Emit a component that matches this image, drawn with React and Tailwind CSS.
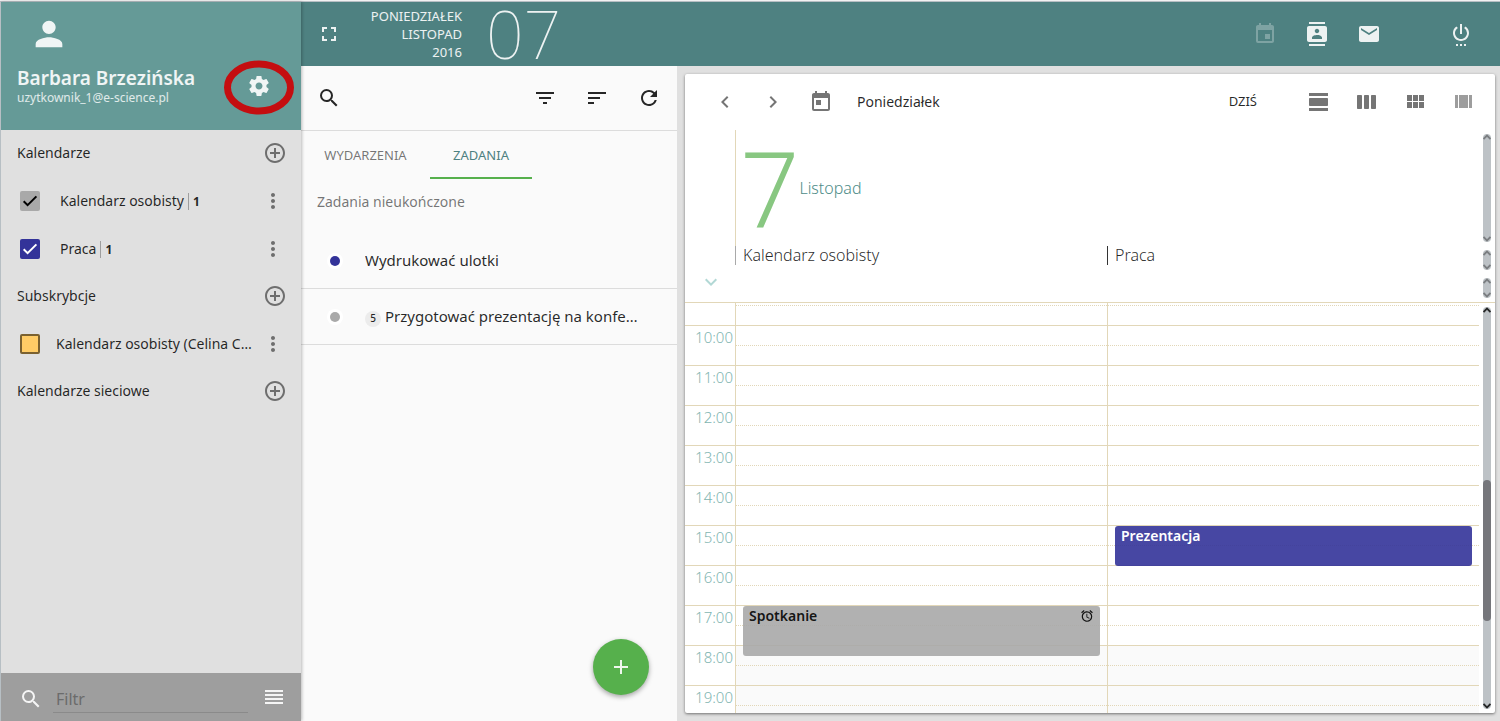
import {
  MdAddCircleOutline,
  MdAlarm,
  MdAdd,
  MdChevronLeft,
  MdChevronRight,
  MdContacts,
  MdEmail,
  MdEvent,
  MdExpandMore,
  MdFilterList,
  MdFullscreen,
  MdMoreVert,
  MdPerson,
  MdRefresh,
  MdSearch,
  MdSettingsPower,
  MdSort,
  MdToday,
} from 'react-icons/md'

const paths = {
  settings:
    'M19.43 12.98c.04-.32.07-.64.07-.98s-.03-.66-.07-.98l2.11-1.65c.19-.15.24-.42.12-.64l-2-3.46c-.12-.22-.39-.3-.61-.22l-2.49 1c-.52-.4-1.08-.73-1.69-.98l-.38-2.65C14.46 2.18 14.25 2 14 2h-4c-.25 0-.46.18-.49.42l-.38 2.65c-.61.25-1.17.59-1.69.98l-2.49-1c-.23-.09-.49 0-.61.22l-2 3.46c-.13.22-.07.49.12.64l2.11 1.65c-.04.32-.07.65-.07.98s.03.66.07.98l-2.11 1.65c-.19.15-.24.42-.12.64l2 3.46c.12.22.39.3.61.22l2.49-1c.52.4 1.08.73 1.69.98l.38 2.65c.03.24.24.42.49.42h4c.25 0 .46-.18.49-.42l.38-2.65c.61-.25 1.17-.59 1.69-.98l2.49 1c.23.09.49 0 .61-.22l2-3.46c.12-.22.07-.49-.12-.64l-2.11-1.65zM12 15.5c-1.93 0-3.5-1.57-3.5-3.5s1.57-3.5 3.5-3.5 3.5 1.57 3.5 3.5-1.57 3.5-3.5 3.5z',
  day: 'M2 21h19v-3H2v3zM20 8H3c-.55 0-1 .45-1 1v6c0 .55.45 1 1 1h17c.55 0 1-.45 1-1V9c0-.55-.45-1-1-1zM2 3v3h19V3H2z',
  week: 'M6 5H3c-.55 0-1 .45-1 1v12c0 .55.45 1 1 1h3c.55 0 1-.45 1-1V6c0-.55-.45-1-1-1zm14 0h-3c-.55 0-1 .45-1 1v12c0 .55.45 1 1 1h3c.55 0 1-.45 1-1V6c0-.55-.45-1-1-1zm-7 0h-3c-.55 0-1 .45-1 1v12c0 .55.45 1 1 1h3c.55 0 1-.45 1-1V6c0-.55-.45-1-1-1z',
  month: 'M4 11h5V5H4v6zm0 7h5v-6H4v6zm6 0h5v-6h-5v6zm6 0h5v-6h-5v6zm-6-7h5V5h-5v6zm6-6v6h5V5h-5z',
  columns: 'M4 18h3V5H4v13zM18 5v13h3V5h-3zM8 18h9V5H8v13z',
  reorder: 'M3 15h18v-2H3v2zm0 4h18v-2H3v2zm0-8h18V9H3v2zm0-6v2h18V5H3z',
}

const Icon = ({ name }) => (
  <svg width="24" height="24" viewBox="0 0 24 24" fill="currentColor">
    <path d={paths[name]} />
  </svg>
)

const IconButton = ({ label, className = '', children }) => (
  <button aria-label={label} className={`flex size-10 shrink-0 items-center justify-center ${className}`}>
    {children}
  </button>
)

const calendars = [
  { id: 'personal', name: 'Kalendarz osobisty', count: 1, checked: true, box: 'bg-[#a9a9a9]', tick: 'text-black' },
  { id: 'work', name: 'Praca', count: 1, checked: true, box: 'bg-[#333399]', tick: 'text-white' },
]

const subscriptions = [
  {
    id: 'celina',
    name: 'Kalendarz osobisty (Celina Czarnecka)',
    checked: false,
    box: 'bg-[#ffcc66] border-2 border-[#7a6130]',
    tick: '',
  },
]

const tasks = [
  { id: 1, title: 'Wydrukować ulotki', dot: 'bg-[#333399]' },
  { id: 2, title: 'Przygotować prezentację na konferencję', priority: 5, dot: 'bg-[#a9a9a9]' },
]

const hours = [10, 11, 12, 13, 14, 15, 16, 17, 18, 19]

const columns = [
  {
    name: 'Kalendarz osobisty',
    border: 'border-[#a9a9a9]',
    events: [{ title: 'Spotkanie', start: 17, length: 1.25, alarm: true, style: 'bg-[#a9a9a9]/90 text-black/90' }],
  },
  {
    name: 'Praca',
    border: 'border-[#333333]',
    events: [{ title: 'Prezentacja', start: 15, length: 1, style: 'bg-[#333399]/90 text-white' }],
  },
]

const views = [
  { name: 'day', label: 'Dzień' },
  { name: 'week', label: 'Tydzień' },
  { name: 'month', label: 'Miesiąc' },
  { name: 'columns', label: 'Wiele kolumn' },
]

const HOUR_HEIGHT = 40
const FIRST_ROW = 22

const SectionTitle = ({ children }) => (
  <div className="flex h-[47px] items-center justify-between pb-px pl-4 pr-[14px]">
    <h2>{children}</h2>
    <button aria-label={`Dodaj: ${children}`} className="text-[#6e6e6e]">
      <MdAddCircleOutline size={24} />
    </button>
  </div>
)

const CalendarItem = ({ item }) => (
  <li className="flex h-12 items-center pb-px pl-[19px] pr-4">
    <span className="relative size-5 shrink-0">
      <input
        id={item.id}
        type="checkbox"
        defaultChecked={item.checked}
        className={`block size-5 appearance-none rounded-xs ${item.box}`}
      />
      {item.checked && (
        <svg
          viewBox="0 0 20 20"
          fill="none"
          stroke="currentColor"
          strokeWidth="2"
          className={`pointer-events-none absolute inset-0 ${item.tick}`}
        >
          <path d="M3.7 10.2 L7.6 14.2 L16.4 5.4" />
        </svg>
      )}
    </span>
    <label htmlFor={item.id} className={`mr-2 min-w-0 flex-1 truncate ${item.count ? 'pl-5' : 'pl-4'}`}>
      {item.name}
      {item.count && <span className="ml-1 border-l border-[#9e9e9e] pl-1 text-xs font-bold">{item.count}</span>}
    </label>
    <button aria-label={`Opcje: ${item.name}`} className="shrink-0 text-[#6e6e6e]">
      <MdMoreVert size={24} />
    </button>
  </li>
)

const Sidebar = () => (
  <aside className="z-10 flex w-[301px] shrink-0 flex-col border-l border-[#b7bfc4] bg-[#e0e0e0] text-sm text-black/85 shadow-[1px_0_3px_rgba(0,0,0,0.25)]">
    <div className="flex h-32 items-end justify-between bg-[#659a97] pl-4 pr-[30px] text-white/90">
      <div className="flex h-full flex-col">
        <MdPerson size={40} className="mt-3 ml-3" />
        <div className="mt-3 text-[19px] leading-6 font-semibold">Barbara Brzezińska</div>
        <div className="text-xs leading-4 text-white/80">uzytkownik_1@e-science.pl</div>
      </div>
      <button aria-label="Ustawienia" className="relative mb-8">
        <Icon name="settings" />
        <svg className="pointer-events-none absolute -top-4 -left-6" width="72" height="58" viewBox="0 0 72 58">
          <ellipse cx="36" cy="29.5" rx="31.5" ry="23.5" fill="none" stroke="#c40e10" strokeWidth="7" />
        </svg>
      </button>
    </div>
    <div className="flex-1">
      <SectionTitle>Kalendarze</SectionTitle>
      <ul>{calendars.map((item) => <CalendarItem key={item.id} item={item} />)}</ul>
      <SectionTitle>Subskrybcje</SectionTitle>
      <ul>{subscriptions.map((item) => <CalendarItem key={item.id} item={item} />)}</ul>
      <SectionTitle>Kalendarze sieciowe</SectionTitle>
    </div>
    <div className="flex h-12 items-center bg-[#9e9e9e] pl-[18px] pr-[15px] text-white/90">
      <MdSearch size={24} className="mt-1 shrink-0" />
      <input
        aria-label="Filtr"
        placeholder="Filtr"
        className="mt-1 mr-[14px] ml-[10px] h-7 min-w-0 flex-1 border-b border-[#8a8a8a] pl-[3px] text-base outline-none placeholder:text-[#6b6b6b]"
      />
      <button aria-label="Lista">
        <Icon name="reorder" />
      </button>
    </div>
  </aside>
)

const Header = () => (
  <header className="flex h-16 shrink-0 items-center bg-[#4e8181] pl-4 pr-[19px] text-white/90">
    <button aria-label="Pełny ekran">
      <MdFullscreen size={24} />
    </button>
    <div className="w-[121px] text-right text-[13px] leading-[18px]">
      <div>PONIEDZIAŁEK</div>
      <div>LISTOPAD</div>
      <div>2016</div>
    </div>
    <div className="ml-6 pb-[3px] text-[66px] leading-[60px] font-thin">07</div>
    <nav className="ml-auto flex items-center gap-3">
      <IconButton label="Kalendarz" className="opacity-30">
        <MdEvent size={24} />
      </IconButton>
      <IconButton label="Kontakty">
        <MdContacts size={24} />
      </IconButton>
      <IconButton label="Poczta">
        <MdEmail size={24} />
      </IconButton>
      <IconButton label="Wyloguj" className="ml-10">
        <MdSettingsPower size={24} />
      </IconButton>
    </nav>
  </header>
)

const TaskList = () => (
  <section className="relative w-[376px] shrink-0 bg-[#fafafa] text-black/85">
    <div className="flex h-[65px] items-center gap-3 border-b border-[#dcdcdc] px-2">
      <IconButton label="Szukaj" className="mr-auto">
        <MdSearch size={24} />
      </IconButton>
      <IconButton label="Filtruj">
        <MdFilterList size={24} />
      </IconButton>
      <IconButton label="Sortuj">
        <MdSort size={24} />
      </IconButton>
      <IconButton label="Odśwież">
        <MdRefresh size={24} />
      </IconButton>
    </div>
    <div className="flex h-12 text-[13px]">
      <button className="w-[129px] border-b-2 border-transparent pt-1 text-black/55">WYDARZENIA</button>
      <button className="w-[102px] border-b-2 border-[#56b04c] pt-1 text-[#4e8181]">ZADANIA</button>
    </div>
    <h2 className="px-4 pt-[13px] pb-[21px] text-sm text-black/55">Zadania nieukończone</h2>
    <ul>
      {tasks.map((task) => (
        <li key={task.id} className="flex h-14 items-center border-b border-[#dcdcdc] pr-9 pl-[26px]">
          <span className="flex size-4 shrink-0 items-center justify-center rounded-full bg-white">
            <span className={`size-[10px] rounded-full ${task.dot}`} />
          </span>
          {task.priority && (
            <span className="mt-1 -mr-[18px] ml-[22px] flex size-4 shrink-0 items-center justify-center rounded-full bg-[#ececec] text-[10px] font-medium">
              {task.priority}
            </span>
          )}
          <span className="ml-[22px] truncate text-[15px]">{task.title}</span>
        </li>
      ))}
    </ul>
    <button
      aria-label="Nowe zadanie"
      className="absolute right-7 bottom-[26px] flex size-14 items-center justify-center rounded-full bg-[#56b04c] text-white/90 shadow-[0_2px_5px_rgba(0,0,0,0.35)]"
    >
      <MdAdd size={24} />
    </button>
  </section>
)

const Arrow = ({ d }) => (
  <svg width="8" height="6" viewBox="0 0 8 6" fill="none" stroke="currentColor" strokeWidth="1.8">
    <path d={d} />
  </svg>
)

const Track = ({ active }) => (
  <div className="flex w-4 shrink-0 py-1 pl-1">
    <div
      className={`relative flex w-2 flex-col items-center justify-between overflow-hidden rounded-full bg-[#bdc2c6] ${active ? 'text-black/80' : 'text-black/35'}`}
    >
      <Arrow d="M0.5 5 L4 1.5 L7.5 5" />
      {active && <div className="absolute inset-x-0 top-[43%] h-[35%] rounded-full bg-[#75767b]" />}
      <Arrow d="M0.5 1 L4 4.5 L7.5 1" />
    </div>
  </div>
)

const EventBox = ({ event }) => (
  <div
    className={`absolute right-[7px] left-[7px] flex justify-between rounded-[3px] px-[6px] text-sm leading-5 font-semibold ${event.style}`}
    style={{
      top: FIRST_ROW + (event.start - hours[0]) * HOUR_HEIGHT + 1,
      height: event.length * HOUR_HEIGHT,
    }}
  >
    {event.title}
    {event.alarm && <MdAlarm size={14} className="mt-[3px]" />}
  </div>
)

const DayView = () => (
  <section className="flex min-w-0 flex-1 bg-[#e0e0e0] pt-2 pr-[5px] pb-2 pl-2">
    <div className="flex min-w-0 flex-1 flex-col overflow-hidden rounded-xs bg-white shadow-[0_1px_3px_rgba(0,0,0,0.5)]">
      <div className="flex h-14 shrink-0 items-center pr-2 pl-4 text-[#757575]">
        <IconButton label="Poprzedni dzień" className="w-12">
          <MdChevronLeft size={24} />
        </IconButton>
        <IconButton label="Następny dzień" className="w-12">
          <MdChevronRight size={24} />
        </IconButton>
        <IconButton label="Wybierz datę" className="w-12">
          <MdToday size={24} />
        </IconButton>
        <span className="ml-3 text-sm text-black/85">Poniedziałek</span>
        <button className="mr-[38px] ml-auto text-[13px] text-black/85">DZIŚ</button>
        {views.map((view) => (
          <IconButton key={view.name} label={view.label} className={view.name === 'columns' ? 'w-12 opacity-70' : 'w-12'}>
            <Icon name={view.name} />
          </IconButton>
        ))}
      </div>

      <div className="flex h-[116px] shrink-0">
        <div className="ml-[50px] flex flex-1 items-center border-l border-[#e2d7b8] pl-1">
          <span className="text-[104px] leading-[116px] font-light text-[#88c781]">7</span>
          <span className="text-base font-light text-[#4e8c88]">Listopad</span>
        </div>
        <Track />
      </div>
      <div className="flex h-7 shrink-0">
        <div className="ml-[50px] flex flex-1 items-start">
          {columns.map((col) => (
            <div key={col.name} className={`flex-1 border-l pl-[7px] text-base leading-[19px] font-light text-black/85 ${col.border}`}>
              {col.name}
            </div>
          ))}
        </div>
        <Track />
      </div>
      <div className="flex h-[29px] shrink-0 justify-between border-b border-[#e2d7b8]">
        <button aria-label="Rozwiń" className="ml-[14px] flex h-4 items-center text-[#b2d8d5]">
          <MdExpandMore size={24} />
        </button>
        <Track />
      </div>

      <div className="flex min-h-0 flex-1">
        <div className="flex min-w-0 flex-1 overflow-hidden">
          <div className="w-[50px] shrink-0 pt-[22px]">
            {hours.map((hour) => (
              <div key={hour} className="h-10 border-t border-[#e2d7b8] pr-[2px] text-right text-[15px] leading-[22px] font-light text-[#7fb5b1]">
                {hour}:00
              </div>
            ))}
          </div>
          {columns.map((col) => (
            <div key={col.name} className="relative flex-1 border-l border-[#e2d7b8] pt-[2px]">
              <div className="h-5 border-t border-dotted border-[#e2d7b8]" />
              {hours.map((hour) => (
                <div key={hour} className={`h-10 border-t border-[#e2d7b8] ${hour >= 18 ? 'bg-[#fafafa]' : ''}`}>
                  <div className="mt-[19px] border-t border-dotted border-[#e2d7b8]" />
                </div>
              ))}
              {col.events.map((event) => <EventBox key={event.title} event={event} />)}
            </div>
          ))}
        </div>
        <Track active />
      </div>
    </div>
  </section>
)

export default function App() {
  return (
    <div className="flex h-screen flex-col border-t border-[#f2f2f2] font-['Noto_Sans',sans-serif]">
      <div className="flex min-h-0 flex-1 border-t border-[#b7bfc4]">
        <Sidebar />
        <div className="flex min-w-0 flex-1 flex-col">
          <Header />
          <main className="flex min-h-0 flex-1">
            <TaskList />
            <DayView />
          </main>
        </div>
      </div>
    </div>
  )
}
